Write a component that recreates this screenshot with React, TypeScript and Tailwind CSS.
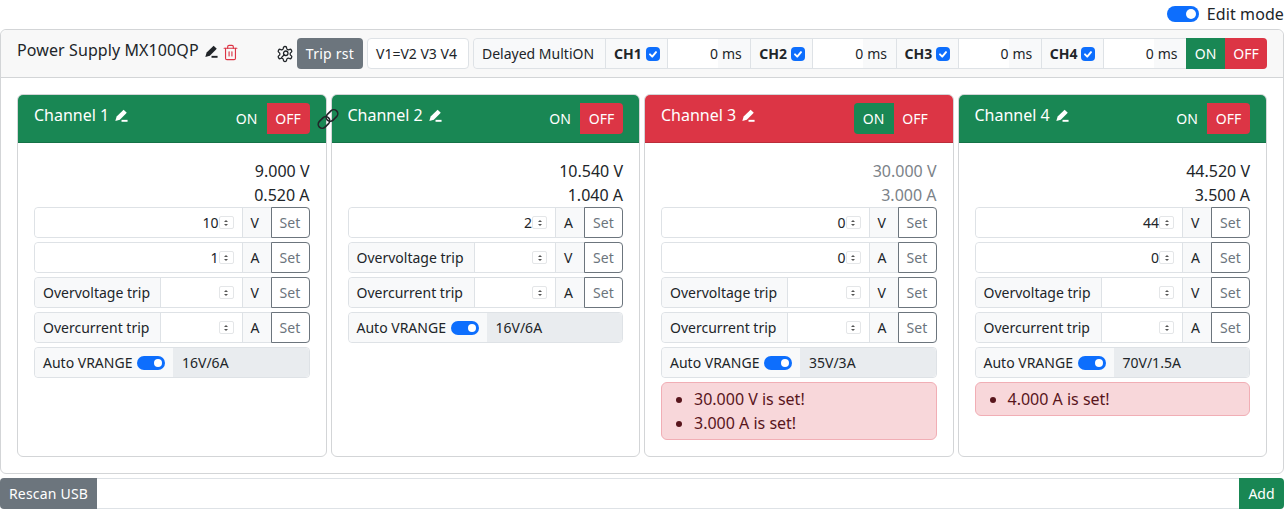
import { Trash2 } from "lucide-react";

type Channel = {
  name: string;
  volts: string;
  amps: string;
  dim?: boolean;
  tripped?: boolean;
  inputs: { value: string; unit: string }[];
  range: string;
  alerts: string[];
};

const channels: Channel[] = [
  {
    name: "Channel 1",
    volts: "9.000 V",
    amps: "0.520 A",
    inputs: [
      { value: "10", unit: "V" },
      { value: "1", unit: "A" },
    ],
    range: "16V/6A",
    alerts: [],
  },
  {
    name: "Channel 2",
    volts: "10.540 V",
    amps: "1.040 A",
    inputs: [{ value: "2", unit: "A" }],
    range: "16V/6A",
    alerts: [],
  },
  {
    name: "Channel 3",
    volts: "30.000 V",
    amps: "3.000 A",
    dim: true,
    tripped: true,
    inputs: [
      { value: "0", unit: "V" },
      { value: "0", unit: "A" },
    ],
    range: "35V/3A",
    alerts: ["30.000 V is set!", "3.000 A is set!"],
  },
  {
    name: "Channel 4",
    volts: "44.520 V",
    amps: "3.500 A",
    inputs: [
      { value: "44", unit: "V" },
      { value: "0", unit: "A" },
    ],
    range: "70V/1.5A",
    alerts: ["4.000 A is set!"],
  },
];

function PenIcon({ className }: { className: string }) {
  return (
    <svg viewBox="0 0 16 16" className={className} fill="currentColor">
      <path d="M11 .8l3.6 3.6-7.9 7.9-5.2 1.5 1.5-5.2z" />
      <rect x="8.6" y="12.4" width="6.9" height="2.2" />
    </svg>
  );
}

function GearIcon({ className }: { className: string }) {
  return (
    <svg viewBox="0 0 24 24" className={className} fill="none" stroke="currentColor" strokeWidth="1.7" strokeLinecap="round" strokeLinejoin="round">
      <path d="M12.22 2h-.44a2 2 0 0 0-2 2v.18a2 2 0 0 1-1 1.73l-.43.25a2 2 0 0 1-2 0l-.15-.08a2 2 0 0 0-2.73.73l-.22.38a2 2 0 0 0 .73 2.73l.15.1a2 2 0 0 1 1 1.72v.51a2 2 0 0 1-1 1.74l-.15.09a2 2 0 0 0-.73 2.73l.22.38a2 2 0 0 0 2.73.73l.15-.08a2 2 0 0 1 2 0l.43.25a2 2 0 0 1 1 1.73V20a2 2 0 0 0 2 2h.44a2 2 0 0 0 2-2v-.18a2 2 0 0 1 1-1.73l.43-.25a2 2 0 0 1 2 0l.15.08a2 2 0 0 0 2.73-.73l.22-.39a2 2 0 0 0-.73-2.73l-.15-.08a2 2 0 0 1-1-1.74v-.5a2 2 0 0 1 1-1.74l.15-.09a2 2 0 0 0 .73-2.73l-.22-.38a2 2 0 0 0-2.73-.73l-.15.08a2 2 0 0 1-2 0l-.43-.25a2 2 0 0 1-1-1.73V4a2 2 0 0 0-2-2z" />
      <circle cx="13" cy="11" r="3" />
      <path d="M11 13l-3.5 3.5" />
    </svg>
  );
}

function LinkIcon({ className }: { className: string }) {
  return (
    <svg viewBox="0 0 24 24" className={className} fill="none" stroke="currentColor" strokeWidth="1.6">
      <rect x="1.5" y="11.5" width="13" height="8" rx="4" transform="rotate(-45 8 15.5)" />
      <rect x="9.5" y="4.5" width="13" height="8" rx="4" transform="rotate(-45 16 8.5)" />
    </svg>
  );
}

function Switch({ small }: { small?: boolean }) {
  return (
    <span
      className={
        small
          ? "flex h-[14px] w-[28px] items-center justify-end rounded-full bg-[#0d6efd] px-[3px]"
          : "flex h-4 w-8 items-center justify-end rounded-full bg-[#0d6efd] px-[3px]"
      }
    >
      <span className={small ? "h-2 w-2 rounded-full bg-white" : "h-2.5 w-2.5 rounded-full bg-white"} />
    </span>
  );
}

function NumberField({ value, className }: { value: string; className: string }) {
  return (
    <div className={`${className} flex h-full min-w-0 items-center border-r border-[#dee2e6] bg-white pl-2 pr-2`}>
      <input
        type="number"
        readOnly
        value={value}
        className="w-full min-w-0 text-right text-sm text-[#212529] outline-none [&::-webkit-inner-spin-button]:appearance-none"
      />
      <span className="flex h-[13px] w-[15px] shrink-0 flex-col items-center justify-center gap-[2px] rounded-[2px] border border-[#e4e6e8] bg-white">
        <span className="h-0 w-0 border-x-[2px] border-b-[2px] border-x-transparent border-b-[#555]" />
        <span className="h-0 w-0 border-x-[2px] border-t-[2px] border-x-transparent border-t-[#555]" />
      </span>
    </div>
  );
}

function SetRow({ label, value, unit }: { label?: string; value: string; unit: string }) {
  return (
    <div className="flex h-[31px] rounded border border-[#dee2e6] text-sm text-[#212529]">
      {label && (
        <span className="flex w-[126px] shrink-0 items-center rounded-l border-r border-[#dee2e6] bg-[#f8f9fa] pl-2">
          {label}
        </span>
      )}
      <NumberField value={value} className={label ? "flex-1 rounded-none" : "flex-1 rounded-l"} />
      <span className="flex w-[28px] shrink-0 items-center bg-[#f8f9fa] pl-2">{unit}</span>
      <button
        type="button"
        className="-my-px -mr-px flex w-[39px] shrink-0 items-center justify-center rounded-r border border-[#6c757d] bg-white tracking-[0.1px] text-[#6c757d]"
      >
        Set
      </button>
    </div>
  );
}

function ChannelCard({ channel, linked }: { channel: Channel; linked?: boolean }) {
  return (
    <div className="relative flex flex-col rounded-md border border-[#d3d5d7]">
      <div
        className={`flex h-[48px] items-start justify-between rounded-t-[5px] border-b border-black/15 px-4 pt-2 text-white ${
          channel.tripped ? "bg-[#dc3545]" : "bg-[#198754]"
        }`}
      >
        <div className="flex items-center gap-[5px]">
          <span>{channel.name}</span>
          <PenIcon className="mt-0.5 h-[14px] w-[14px]" />
        </div>
        <div className="flex h-[31px] text-sm">
          <span
            className={`flex w-[40px] items-center justify-center rounded-l ${
              channel.tripped ? "bg-[#198754]" : ""
            }`}
          >
            ON
          </span>
          <span
            className={`flex w-[43px] items-center justify-center rounded-r ${
              channel.tripped ? "" : "bg-[#dc3545]"
            }`}
          >
            OFF
          </span>
        </div>
      </div>
      {linked && <LinkIcon className="absolute left-[298px] top-[12px] z-10 h-6 w-6 text-[#212529]" />}
      <div className="flex flex-col gap-1 p-4 text-[#212529]">
        <div className={`-mb-1 text-right leading-6 ${channel.dim ? "text-[#7b8288]" : ""}`}>
          <div>{channel.volts}</div>
          <div>{channel.amps}</div>
        </div>
        {channel.inputs.map((input) => (
          <SetRow key={input.unit} value={input.value} unit={input.unit} />
        ))}
        <SetRow label="Overvoltage trip" value="" unit="V" />
        <SetRow label="Overcurrent trip" value="" unit="A" />
        <div className="flex h-[31px] rounded border border-[#dee2e6] text-sm">
          <span className="flex w-[138px] shrink-0 items-center gap-[5px] rounded-l bg-[#f8f9fa] pl-2">
            Auto VRANGE
            <Switch small />
          </span>
          <span className="flex flex-1 items-center rounded-r bg-[#e9ecef] pl-[9px]">{channel.range}</span>
        </div>
        {channel.alerts.length > 0 && (
          <ul className="list-disc rounded-md border border-[#f1aeb5] bg-[#f8d7da] py-1 pl-8 leading-6 text-[#58151c]">
            {channel.alerts.map((alert) => (
              <li key={alert}>{alert}</li>
            ))}
          </ul>
        )}
      </div>
    </div>
  );
}

function DelayCell({ label }: { label: string }) {
  return (
    <>
      <span className="flex w-[63px] items-center gap-1 border-x border-[#dee2e6] bg-[#f8f9fa] pl-2 font-bold">
        {label}
        <span className="flex h-[14px] w-[14px] items-center justify-center rounded-[4px] bg-[#0d6efd]">
          <svg viewBox="0 0 16 16" className="h-3 w-3" fill="none" stroke="white" strokeWidth="2.6" strokeLinecap="round" strokeLinejoin="round">
            <path d="M4 8.5l3 3 5-6" />
          </svg>
        </span>
      </span>
      <span className="flex w-[50px] items-center justify-end bg-white">0</span>
      <span className="flex w-[32.25px] items-center bg-[#f8f9fa] pl-[4px]">ms</span>
    </>
  );
}

export default function App() {
  return (
    <div className="mr-0.5 font-['Noto_Sans',sans-serif] text-base text-[#212529]">
      <div className="flex h-[29px] items-center justify-end gap-2 pb-[2px]">
        <Switch />
        <span className="tracking-[0.1px]">Edit mode</span>
      </div>

      <div className="rounded-md border border-[#d3d5d7]">
        <div className="flex h-[48px] items-start rounded-t-md border-b border-[#d3d5d7] bg-[#f8f8f8] px-4 pt-2">
          <span className="tracking-[0.1px]">Power Supply MX100QP</span>
          <PenIcon className="ml-[5px] mt-[7px] h-[14px] w-[14px]" />
          <Trash2 className="ml-[4px] mt-[6px] h-[17px] w-[17px] text-[#dc3545]" strokeWidth={1.6} />
          <div className="ml-auto flex h-[31px] items-center gap-1 text-sm">
            <GearIcon className="-mr-px h-[18px] w-[18px]" />
            <button type="button" className="h-full w-[66px] rounded bg-[#6c757d] tracking-[0.25px] text-white">
              Trip rst
            </button>
            <span className="flex h-full w-[102px] items-center rounded border border-[#dee2e6] bg-white pl-2">
              V1=V2 V3 V4
            </span>
            <div className="flex h-full rounded border border-[#dee2e6]">
              <span className="flex w-[131px] items-center rounded-l bg-[#f8f9fa] pl-2">Delayed MultiON</span>
              <DelayCell label="CH1" />
              <DelayCell label="CH2" />
              <DelayCell label="CH3" />
              <DelayCell label="CH4" />
              <span className="-my-px flex w-[39px] items-center justify-center bg-[#198754] text-white">ON</span>
              <span className="-my-px -mr-px flex w-[42px] items-center justify-center rounded-r bg-[#dc3545] text-white">OFF</span>
            </div>
          </div>
        </div>

        <div className="grid grid-cols-4 items-stretch gap-1 p-4">
          {channels.map((channel, index) => (
            <ChannelCard key={channel.name} channel={channel} linked={index === 0} />
          ))}
        </div>
      </div>

      <div className="mt-1 flex h-[31px] text-sm">
        <button type="button" className="w-[97px] rounded-l bg-[#6c757d] tracking-[0.2px] text-white">
          Rescan USB
        </button>
        <div className="flex-1 border-y border-[#dee2e6] bg-white" />
        <button type="button" className="w-[45px] rounded-r bg-[#198754] text-white">
          Add
        </button>
      </div>
    </div>
  );
}
